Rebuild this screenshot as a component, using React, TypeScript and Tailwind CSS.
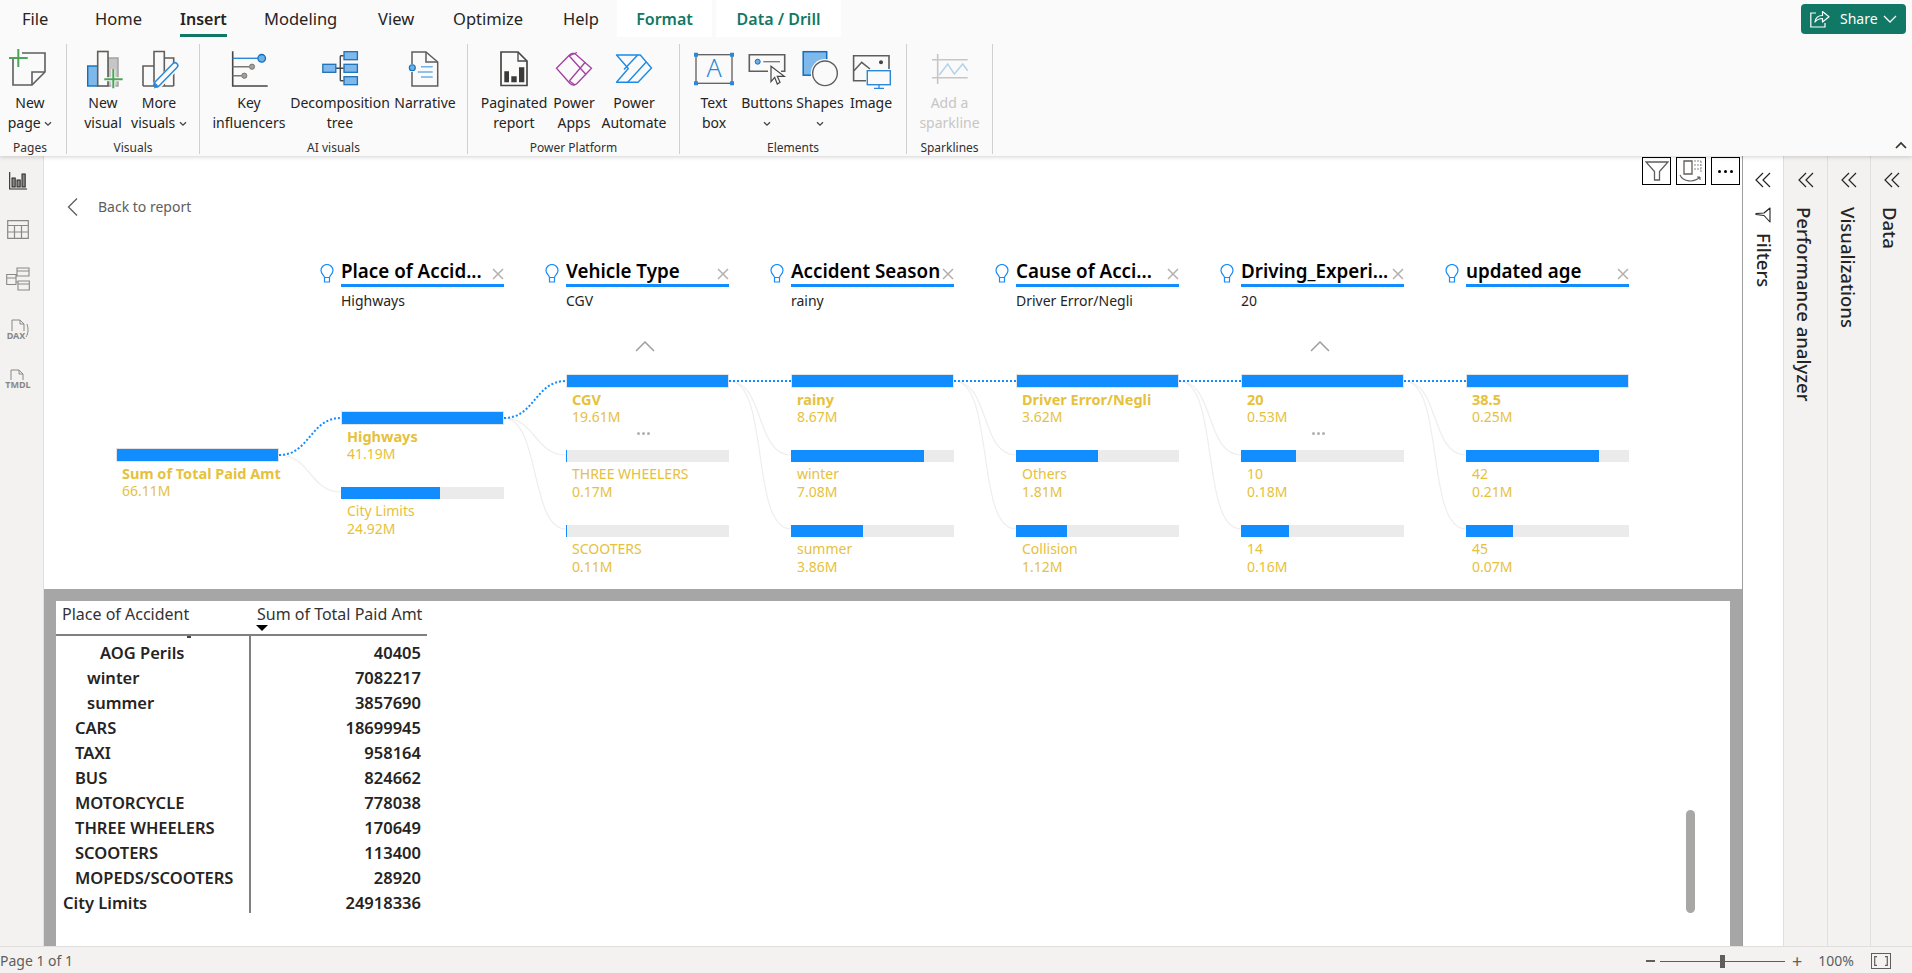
import React from 'react';

const BLUE = '#118dff';

interface TreeNode {
  label: string;
  value: string;
  pct: number;
  selected?: boolean;
}

interface TreeColumn {
  title?: string;
  picked?: string;
  offset: string;
  chevron?: boolean;
  nodes: TreeNode[];
}

const columns: TreeColumn[] = [
  {
    offset: 'h-[137px]',
    nodes: [{ label: 'Sum of Total Paid Amt', value: '66.11M', pct: 100, selected: true }],
  },
  {
    title: 'Place of Accid...',
    picked: 'Highways',
    offset: 'h-[100px]',
    nodes: [
      { label: 'Highways', value: '41.19M', pct: 100, selected: true },
      { label: 'City Limits', value: '24.92M', pct: 60.5 },
    ],
  },
  {
    title: 'Vehicle Type',
    picked: 'CGV',
    offset: 'h-[63px]',
    chevron: true,
    nodes: [
      { label: 'CGV', value: '19.61M', pct: 100, selected: true },
      { label: 'THREE WHEELERS', value: '0.17M', pct: 0.9 },
      { label: 'SCOOTERS', value: '0.11M', pct: 0.6 },
    ],
  },
  {
    title: 'Accident Season',
    picked: 'rainy',
    offset: 'h-[63px]',
    nodes: [
      { label: 'rainy', value: '8.67M', pct: 100, selected: true },
      { label: 'winter', value: '7.08M', pct: 81.7 },
      { label: 'summer', value: '3.86M', pct: 44.4 },
    ],
  },
  {
    title: 'Cause of Acci...',
    picked: 'Driver Error/Negli',
    offset: 'h-[63px]',
    nodes: [
      { label: 'Driver Error/Negli', value: '3.62M', pct: 100, selected: true },
      { label: 'Others', value: '1.81M', pct: 50 },
      { label: 'Collision', value: '1.12M', pct: 31.3 },
    ],
  },
  {
    title: 'Driving_Experi...',
    picked: '20',
    offset: 'h-[63px]',
    chevron: true,
    nodes: [
      { label: '20', value: '0.53M', pct: 100, selected: true },
      { label: '10', value: '0.18M', pct: 33.8 },
      { label: '14', value: '0.16M', pct: 29.6 },
    ],
  },
  {
    title: 'updated age',
    offset: 'h-[63px]',
    nodes: [
      { label: '38.5', value: '0.25M', pct: 100, selected: true },
      { label: '42', value: '0.21M', pct: 81.3 },
      { label: '45', value: '0.07M', pct: 28.9 },
    ],
  },
];

const tableRows = [
  { name: 'AOG Perils', value: '40405', indent: 'pl-[44px]' },
  { name: 'winter', value: '7082217', indent: 'pl-[31px]' },
  { name: 'summer', value: '3857690', indent: 'pl-[31px]' },
  { name: 'CARS', value: '18699945', indent: 'pl-[19px]' },
  { name: 'TAXI', value: '958164', indent: 'pl-[19px]' },
  { name: 'BUS', value: '824662', indent: 'pl-[19px]' },
  { name: 'MOTORCYCLE', value: '778038', indent: 'pl-[19px]' },
  { name: 'THREE WHEELERS', value: '170649', indent: 'pl-[19px]' },
  { name: 'SCOOTERS', value: '113400', indent: 'pl-[19px]' },
  { name: 'MOPEDS/SCOOTERS', value: '28920', indent: 'pl-[19px]' },
  { name: 'City Limits', value: '24918336', indent: 'pl-[7px]' },
];

const Icon: React.FC<{ children: React.ReactNode }> = ({ children }) => (
  <svg width="40" height="40" viewBox="0 0 40 40" fill="none" className="overflow-visible">
    {children}
  </svg>
);

const SmallChevron = () => (
  <svg width="8" height="6" viewBox="0 0 8 6" fill="none" className="inline-block">
    <path d="M1 1.2 4 4.2 7 1.2" stroke="#444" strokeWidth="1.3" />
  </svg>
);

const RibbonButton: React.FC<{
  className: string;
  icon: React.ReactNode;
  lines: React.ReactNode[];
  disabled?: boolean;
}> = ({ className, icon, lines, disabled }) => (
  <div className={`flex flex-col items-center shrink-0 ${className}`}>
    <div className="h-[49px] pt-[4px] flex justify-center">{icon}</div>
    <div className={`text-[14px] leading-[20px] text-center whitespace-nowrap ${disabled ? 'text-[#c8c6c4]' : 'text-[#252423]'}`}>
      {lines.map((line, i) => (
        <div key={i} className="h-[20px]">{line}</div>
      ))}
    </div>
  </div>
);

const RibbonGroup: React.FC<{ className: string; label: string; children: React.ReactNode }> = ({ className, label, children }) => (
  <div className={`shrink-0 h-[110px] flex flex-col border-r border-[#d2d0ce] ${className}`}>
    <div className="flex h-[89px]">{children}</div>
    <div className="text-[12px] leading-[16px] mt-[7px] text-center text-[#323130]">{label}</div>
  </div>
);

const Ribbon = () => (
  <div className="relative z-10 h-[156px] shrink-0 bg-[#fafafa] shadow-[0_1px_4px_rgba(0,0,0,0.18)]">
    <div className="flex h-[37px] text-[16.5px] leading-[24px] text-[#252423]">
      <div className="w-[22px]" />
      <div className="w-[73px] pt-[7px]">File</div>
      <div className="w-[85px] pt-[7px]">Home</div>
      <div className="w-[84px]">
        <div className="inline-block h-[37px] pt-[7px] text-[16px] font-semibold border-b-[3px] border-[#117865]">Insert</div>
      </div>
      <div className="w-[114px] pt-[7px]">Modeling</div>
      <div className="w-[75px] pt-[7px]">View</div>
      <div className="w-[110px] pt-[7px]">Optimize</div>
      <div className="w-[54px] pt-[7px]">Help</div>
      <div className="w-[95px] bg-white pt-[7px] text-center text-[16px] font-semibold text-[#117865]">Format</div>
      <div className="ml-[4px] w-[125px] bg-white pt-[7px] text-center text-[16px] font-semibold text-[#117865]">Data / Drill</div>
    </div>

    <div className="flex pt-[7px]">
      <RibbonGroup className="w-[67px] pr-[6px]" label="Pages">
        <RibbonButton
          className="w-[60px]"
          lines={['New', <span key="p">page <SmallChevron /></span>]}
          icon={
            <Icon>
              <path d="M3 10V37H22L35 24V5H12" stroke="#605e5c" strokeWidth="1.6" />
              <path d="M22 37V24H35" stroke="#605e5c" strokeWidth="1.6" />
              <path d="M-1 10H17.7M8.3 1V19" stroke="#4ca65a" strokeWidth="2" />
            </Icon>
          }
        />
      </RibbonGroup>

      <RibbonGroup className="w-[133px]" label="Visuals">
        <div className="w-[8px]" />
        <RibbonButton
          className="w-[56px]"
          lines={['New', 'visual']}
          icon={
            <Icon>
              <rect x="25" y="10" width="10" height="28" fill="#c8c6c4" stroke="#a19f9d" strokeWidth="1.4" />
              <rect x="4.7" y="18" width="10" height="20" fill="#7fb9ec" stroke="#106ebe" strokeWidth="1.4" />
              <rect x="14.7" y="3.5" width="10.3" height="34.5" fill="#fafafa" stroke="#605e5c" strokeWidth="1.6" />
              <path d="M21.3 31.3H39.7M30.3 21V40.3" stroke="#fafafa" strokeWidth="4" />
              <path d="M21.3 31.3H39.7M30.3 21V40.3" stroke="#4ca65a" strokeWidth="2" />
            </Icon>
          }
        />
        <RibbonButton
          className="w-[56px]"
          lines={['More', <span key="v">visuals <SmallChevron /></span>]}
          icon={
            <Icon>
              <path d="M4 38V18H15M15 38V3.5H25.3V38M25.3 10H34.7V38M4 38H34.7" stroke="#605e5c" strokeWidth="1.6" />
              <path d="M17 38.5 36.5 18" stroke="#fafafa" strokeWidth="9" />
              <path d="M18 36 36 17.5" stroke="#2b88d8" strokeWidth="7" strokeLinecap="round" />
              <path d="M18 36 36 17.5" stroke="#fafafa" strokeWidth="4" strokeLinecap="round" />
              <path d="M15 40.5 16 34.5 20 38.5Z" fill="#2b88d8" />
            </Icon>
          }
        />
      </RibbonGroup>

      <RibbonGroup className="w-[268px]" label="AI visuals">
        <div className="w-[9px]" />
        <RibbonButton
          className="w-[80px]"
          lines={['Key', 'influencers']}
          icon={
            <Icon>
              <path d="M3.7 3.3V38H38.7" stroke="#484644" strokeWidth="1.6" />
              <path d="M3.7 10.3H28.7" stroke="#2b88d8" strokeWidth="1.4" />
              <path d="M3.7 18.7H20M3.7 27.7H12.5" stroke="#797775" strokeWidth="1.4" />
              <circle cx="32.7" cy="10.3" r="3.8" fill="#6cb0e6" stroke="#106ebe" strokeWidth="1.3" />
              <circle cx="23" cy="18.7" r="2.6" fill="#a19f9d" stroke="#797775" strokeWidth="1" />
              <circle cx="15.3" cy="27.7" r="2.6" fill="#a19f9d" stroke="#797775" strokeWidth="1" />
            </Icon>
          }
        />
        <RibbonButton
          className="w-[102px]"
          lines={['Decomposition', 'tree']}
          icon={
            <Icon>
              <path d="M16 20.3H23.7M20.3 7.7V32.7M20.3 7.7H23.7M20.3 32.7H23.7" stroke="#484644" strokeWidth="1.4" />
              <rect x="2.8" y="16.3" width="13" height="8" fill="#7fb9ec" stroke="#1f6fb5" strokeWidth="1.3" />
              <rect x="24" y="3.7" width="13.4" height="8" fill="#7fb9ec" stroke="#1f6fb5" strokeWidth="1.3" />
              <rect x="24" y="16.3" width="13.4" height="8" fill="#7fb9ec" stroke="#1f6fb5" strokeWidth="1.3" />
              <rect x="24" y="28.7" width="13.4" height="8" fill="#7fb9ec" stroke="#1f6fb5" strokeWidth="1.3" />
            </Icon>
          }
        />
        <RibbonButton
          className="w-[68px]"
          lines={['Narrative']}
          icon={
            <Icon>
              <path d="M7 16V4H21L32.7 14V38H7V24" stroke="#605e5c" strokeWidth="1.5" />
              <path d="M21 4V14H32.7" stroke="#605e5c" strokeWidth="1.5" />
              <circle cx="7.3" cy="19.7" r="3" fill="#6cb0e6" stroke="#106ebe" strokeWidth="1.1" />
              <path d="M16 18.7H27.7M12.7 24H27.7M16 29H27.7" stroke="#6cb0e6" strokeWidth="1.4" />
            </Icon>
          }
        />
      </RibbonGroup>

      <RibbonGroup className="w-[212px]" label="Power Platform">
        <div className="w-[12px]" />
        <RibbonButton
          className="w-[68px]"
          lines={['Paginated', 'report']}
          icon={
            <Icon>
              <path d="M7 4H24L33 13V37.5H7Z" stroke="#484644" strokeWidth="1.7" />
              <path d="M24 4V13H33" stroke="#484644" strokeWidth="1.3" />
              <path d="M10.3 23.3H15V34.3H10.3ZM17.3 28.3H22.7V34.3H17.3ZM25 19.3H30.3V34.3H25Z" fill="#3b3a39" />
            </Icon>
          }
        />
        <RibbonButton
          className="w-[52px]"
          lines={['Power', 'Apps']}
          icon={
            <Icon>
              <path d="M2.5 20.3 15 7.5C17 5.5 20 4.5 22 6.5L37.5 20.3 23 35.5C21 37.5 18 37.5 16 35.5Z" stroke="#a33ea1" strokeWidth="1.3" />
              <path d="M15.3 8 32 26.5M15.3 33 31 14.5M15 8 23 4.5M15.5 33 21 37" stroke="#a33ea1" strokeWidth="1.3" />
            </Icon>
          }
        />
        <RibbonButton
          className="w-[68px]"
          lines={['Power', 'Automate']}
          icon={
            <Icon>
              <path d="M2.5 7H26.3L37.5 20 24 34.3H2.5L14.3 20.5Z" stroke="#1a8be6" strokeWidth="1.4" strokeLinejoin="round" />
              <path d="M23.7 7 10 21.5M32 14.3 13.7 34.3" stroke="#1a8be6" strokeWidth="1.4" />
            </Icon>
          }
        />
      </RibbonGroup>

      <RibbonGroup className="w-[227px]" label="Elements">
        <div className="w-[9px]" />
        <RibbonButton
          className="w-[50px]"
          lines={['Text', 'box']}
          icon={
            <Icon>
              <rect x="2" y="6.7" width="36" height="28.6" stroke="#605e5c" strokeWidth="1.3" />
              <path d="M0 4.7H4V8.7H0ZM36 4.7H40V8.7H36ZM0 33.3H4V37.3H0ZM36 33.3H40V37.3H36Z" fill="#2b88d8" />
              <text x="20" y="29" textAnchor="middle" fontSize="25" fill="#2b88d8" fontFamily="Noto Sans, sans-serif" fontWeight="300">A</text>
            </Icon>
          }
        />
        <RibbonButton
          className="w-[56px]"
          lines={['Buttons', <SmallChevron key="b" />]}
          icon={
            <Icon>
              <path d="M21 23.3H2.3V6.7H37.7V23.3H34" stroke="#605e5c" strokeWidth="1.6" />
              <circle cx="10.7" cy="13.7" r="2.5" fill="#6cb0e6" stroke="#106ebe" strokeWidth="1" />
              <path d="M16.3 13.7H33" stroke="#797775" strokeWidth="1.3" />
              <path d="M24 18.3V33.7L27.7 29.3 30.3 36 33 34.3 30.3 28.3H37.3Z" fill="#fafafa" stroke="#484644" strokeWidth="1.2" />
            </Icon>
          }
        />
        <RibbonButton
          className="w-[50px]"
          lines={['Shapes', <SmallChevron key="s" />]}
          icon={
            <Icon>
              <rect x="3.2" y="3.7" width="23.5" height="23.5" fill="#7fb9ec" stroke="#106ebe" strokeWidth="1.5" />
              <circle cx="25" cy="25.3" r="14.2" fill="#fafafa" />
              <circle cx="25" cy="25.3" r="12.3" fill="#fafafa" stroke="#605e5c" strokeWidth="1.4" />
            </Icon>
          }
        />
        <RibbonButton
          className="w-[52px]"
          lines={['Image']}
          icon={
            <Icon>
              <path d="M15 32.7H2.6V7.7H38V21" stroke="#605e5c" strokeWidth="1.6" />
              <path d="M3 22.7 10.7 14.3 19 21" stroke="#605e5c" strokeWidth="1.5" />
              <circle cx="30" cy="14.3" r="2" fill="#484644" />
              <rect x="16.3" y="22.7" width="23" height="14" fill="#fafafa" stroke="#2b88d8" strokeWidth="1.4" />
              <path d="M28 36.7V40M23 40.3H33" stroke="#2b88d8" strokeWidth="1.3" />
            </Icon>
          }
        />
      </RibbonGroup>

      <RibbonGroup className="w-[86px]" label="Sparklines">
        <RibbonButton
          className="w-[85px]"
          disabled
          lines={['Add a', 'sparkline']}
          icon={
            <Icon>
              <path d="M7.7 6V36M2 11.7H37.7M2 29.7H37.7" stroke="#c8c6c4" strokeWidth="1.6" />
              <path d="M9.3 27 17.7 16 24.3 26 32.7 16 37.7 22.7" stroke="#b5d3e8" strokeWidth="1.5" />
            </Icon>
          }
        />
      </RibbonGroup>
    </div>

    <div className="absolute right-[6px] top-[4px] w-[105px] h-[30px] rounded-[4px] bg-[#117865] text-white flex items-center pl-[9px]">
      <svg width="20" height="18" viewBox="0 0 20 18" fill="none" className="mr-[10px]">
        <path d="M6 3H0.8V17H15V13" stroke="white" strokeWidth="1.2" />
        <path d="M5 12C5.5 8 8.5 5.5 12.5 5.5V1.5L19 6.8 12.5 12V8.5C9.5 8.5 7 9.5 5 12Z" stroke="white" strokeWidth="1.2" strokeLinejoin="round" />
      </svg>
      <span className="text-[14px] leading-[20px]">Share</span>
      <svg width="14" height="8" viewBox="0 0 14 8" fill="none" className="ml-[5px]">
        <path d="M1 1 7 7 13 1" stroke="white" strokeWidth="1.3" />
      </svg>
    </div>
    <svg width="12" height="8" viewBox="0 0 12 8" fill="none" className="absolute right-[5px] top-[141px]">
      <path d="M1 7 6 2 11 7" stroke="#323130" strokeWidth="1.7" />
    </svg>
  </div>
);

const Sidebar = () => (
  <div className="w-[44px] shrink-0 bg-[#f3f2f1] border-r border-[#e1dfdd] pr-[7px] pt-[16px] flex flex-col items-center">
    <svg width="18" height="18" viewBox="0 0 18 18" fill="none">
      <path d="M0.7 0V17H18" stroke="#252423" strokeWidth="1.1" />
      <rect x="3" y="6" width="3.2" height="9" fill="#8a8886" stroke="#252423" />
      <rect x="8" y="8" width="3.2" height="7" fill="#8a8886" stroke="#252423" />
      <rect x="13" y="2" width="3.2" height="13" fill="#8a8886" stroke="#252423" />
    </svg>
    <svg width="22" height="19" viewBox="0 0 22 19" fill="none" className="mt-[30px]">
      <path d="M0.7 0.7H21.3V18.3H0.7ZM0.7 5.5H21.3M0.7 12H21.3M7.5 5.5V18.3M14.5 5.5V18.3" stroke="#8a8886" strokeWidth="1.2" />
    </svg>
    <svg width="24" height="24" viewBox="0 0 24 24" fill="none" className="mt-[28px]">
      <path d="M0.7 7.5H10V17.5H0.7ZM0.7 11H10M11 1H23V9H11ZM11 4H23M12 14H23.3V23H12ZM12 17H23.3M10 9H11M10 15H12" stroke="#8a8886" strokeWidth="1.1" />
    </svg>
    <svg width="24" height="22" viewBox="0 0 24 22" fill="none" className="mt-[28px] overflow-visible">
      <path d="M6 12V1H14L18 5V12M14 1V5H18M21 5C22.5 10 22.5 14 20 18" stroke="#8a8886" strokeWidth="1" />
      <text x="10" y="20" textAnchor="middle" fontSize="9" fontWeight="700" fill="#8a8886" fontFamily="Noto Sans, sans-serif">DAX</text>
    </svg>
    <svg width="24" height="22" viewBox="0 0 24 22" fill="none" className="mt-[28px] overflow-visible">
      <path d="M5 11V1H13L17 5V11M13 1V5H17" stroke="#8a8886" strokeWidth="1" />
      <text x="12" y="19" textAnchor="middle" fontSize="9" fontWeight="700" fill="#8a8886" fontFamily="Noto Sans, sans-serif">TMDL</text>
    </svg>
  </div>
);

const Bulb = () => (
  <svg width="14" height="19" viewBox="0 0 14 19" fill="none" className="absolute left-[-21px] top-[3px]">
    <path d="M4.5 13.5C4 11 1 9.5 1 6.5A6 6 0 0 1 13 6.5C13 9.5 10 11 9.5 13.5Z" stroke={BLUE} strokeWidth="1.2" />
    <path d="M4.5 13.5V18H9.5V13.5" stroke={BLUE} strokeWidth="1.2" />
  </svg>
);

const CloseX = () => (
  <svg width="12" height="12" viewBox="0 0 12 12" fill="none" className="shrink-0 mt-[7px]">
    <path d="M1 1 11 11M11 1 1 11" stroke="#b3b0ad" strokeWidth="1.5" />
  </svg>
);

const Connectors = () => {
  const selected = [
    'M279 455C310 455 310 418 341 418',
    'M504 418C535 418 535 381 566 381',
    'M729 381H791',
    'M954 381H1016',
    'M1179 381H1241',
    'M1404 381H1466',
  ];
  const others = [
    'M279 455C310 455 310 492 341 492',
    'M504 418C535 418 535 455 566 455',
    'M504 418C540 418 530 529 566 529',
    'M729 381C765 381 755 455 791 455',
    'M729 381C770 381 750 529 791 529',
    'M954 381C990 381 980 455 1016 455',
    'M954 381C995 381 975 529 1016 529',
    'M1179 381C1215 381 1205 455 1241 455',
    'M1179 381C1220 381 1200 529 1241 529',
    'M1404 381C1440 381 1430 455 1466 455',
    'M1404 381C1445 381 1425 529 1466 529',
  ];
  return (
    <svg className="absolute inset-0" width="1698" height="433" viewBox="44 156 1698 433" fill="none">
      {others.map(d => (
        <path key={d} d={d} stroke="#eeeeee" strokeWidth="1.2" />
      ))}
      {selected.map(d => (
        <path key={d} d={d} stroke={BLUE} strokeWidth="2" strokeDasharray="2 2" />
      ))}
    </svg>
  );
};

const TreeBar: React.FC<{ node: TreeNode; showDots: boolean }> = ({ node, showDots }) => (
  <div className="relative h-[75px]">
    <div className={`h-[14px] bg-[#ebebeb] ${node.selected ? 'border border-[#e3e3e3]' : 'border-y border-white'}`}>
      <div className="h-full bg-[#118dff]" style={{ width: `${node.pct}%` }} />
    </div>
    <div className="pl-[6px] mt-[2px] text-[14px] leading-[18px] text-[#e6c13c] whitespace-nowrap">
      <div className={node.selected ? 'font-bold text-[14.5px]' : ''}>{node.label}</div>
      <div>{node.value}</div>
    </div>
    {showDots && (
      <div className="absolute left-[71px] top-[58px] flex gap-[2px]">
        <div className="w-[3px] h-[3px] rounded-full bg-[#b3b0ad]" />
        <div className="w-[3px] h-[3px] rounded-full bg-[#b3b0ad]" />
        <div className="w-[3px] h-[3px] rounded-full bg-[#b3b0ad]" />
      </div>
    )}
  </div>
);

const DecompositionTree = () => (
  <div className="relative h-[433px] shrink-0 bg-white">
    <Connectors />
    <div className="absolute right-[2px] top-[1px] flex gap-[5px]">
      <div className="w-[29px] h-[28px] border border-black flex items-center justify-center bg-white">
        <svg width="24" height="22" viewBox="0 0 24 22" fill="none">
          <path d="M1 2H23L14.5 11.5V20H9.5V11.5Z" stroke="#605e5c" strokeWidth="1.3" />
        </svg>
      </div>
      <div className="w-[30px] h-[28px] border border-black flex items-center justify-center bg-white">
        <svg width="24" height="24" viewBox="0 0 24 24" fill="none">
          <path d="M5 2H13V15H5Z" stroke="#605e5c" strokeWidth="1.3" />
          <path d="M15 2H22M15 6H22M15 10H22M22 2V14" stroke="#8a8886" strokeWidth="1" strokeDasharray="2 1" />
          <path d="M1 16C4 23 15 24 21 18M21 18V21M21 18H18" stroke="#605e5c" strokeWidth="1.1" />
        </svg>
      </div>
      <div className="w-[29px] h-[28px] border border-black flex items-center justify-center gap-[3px] bg-white">
        <div className="w-[3px] h-[3px] rounded-full bg-black" />
        <div className="w-[3px] h-[3px] rounded-full bg-black" />
        <div className="w-[3px] h-[3px] rounded-full bg-black" />
      </div>
    </div>

    <div className="absolute left-[23px] top-[41px] flex items-center">
      <svg width="11" height="18" viewBox="0 0 11 18" fill="none">
        <path d="M10 0.5 1.5 9 10 17.5" stroke="#605e5c" strokeWidth="1.3" />
      </svg>
      <span className="ml-[20px] text-[14px] leading-[20px] text-[#605e5c]">Back to report</span>
    </div>

    <div className="relative flex gap-[62px] pl-[72px] pt-[105px]">
      {columns.map((col, c) => (
        <div key={c} className="w-[163px] shrink-0">
          <div className="h-[50px] relative">
            {col.title && (
              <>
                <Bulb />
                <div className="flex justify-between h-[23px]">
                  <span className="text-[18.8px] leading-[21px] font-semibold text-black whitespace-nowrap">{col.title}</span>
                  <CloseX />
                </div>
                <div className="h-[3px] bg-[#118dff]" />
                <div className="text-[14px] leading-[20px] mt-[4px] text-[#252423]">{col.picked}</div>
              </>
            )}
          </div>
          <div className={`${col.offset} flex justify-center pt-[30px]`}>
            {col.chevron && (
              <svg width="20" height="11" viewBox="0 0 20 11" fill="none" className="ml-[-6px]">
                <path d="M1 10 10 1 19 10" stroke="#a19f9d" strokeWidth="1.5" />
              </svg>
            )}
          </div>
          {col.nodes.map((node, n) => (
            <TreeBar key={n} node={node} showDots={!!col.chevron && n === 0} />
          ))}
        </div>
      ))}
    </div>
  </div>
);

const MatrixPanel = () => (
  <div className="flex-1 bg-[#a6a6a6] pt-[12px] px-[12px] min-h-0">
    <div className="relative h-full bg-white">
      <div className="w-[371px] h-[35px] border-b-2 border-[#808080] flex text-[16px] leading-[24px] text-[#333333]">
        <div className="w-[194px] pl-[6px] pt-[1px]">Place of Accident</div>
        <div className="pl-[7px] pt-[1px] relative whitespace-nowrap">
          Sum of Total Paid Amt
          <div className="absolute left-[6px] top-[24px] w-0 h-0 border-x-[6px] border-x-transparent border-t-[6px] border-t-black" />
        </div>
      </div>
      <div className="absolute left-[131px] top-[35px] w-[4px] h-[2px] bg-[#444]" />
      <div className="w-[371px] flex text-[16.5px] leading-[25px] font-semibold text-[#252423]">
        <div className="w-[195px] h-[277px] pt-[4px] border-r-2 border-[#808080] whitespace-nowrap">
          {tableRows.map(row => (
            <div key={row.name} className={`h-[25px] ${row.indent}`}>{row.name}</div>
          ))}
        </div>
        <div className="flex-1 pt-[4px] text-right pr-[6px]">
          {tableRows.map(row => (
            <div key={row.name} className="h-[25px]">{row.value}</div>
          ))}
        </div>
      </div>
      <div className="absolute left-[1630px] top-[209px] w-[9px] h-[103px] rounded-full bg-[#a8a7a5]" />
    </div>
  </div>
);

const ChevronsLeft = () => (
  <svg width="16" height="16" viewBox="0 0 16 16" fill="none">
    <path d="M8 1 1 8 8 15M15 1 8 8 15 15" stroke="#252423" strokeWidth="1.2" />
  </svg>
);

const SidePane: React.FC<{ className: string; label: string; funnel?: boolean }> = ({ className, label, funnel }) => (
  <div className={`shrink-0 flex flex-col items-center pt-[16px] ${className}`}>
    <ChevronsLeft />
    {funnel ? (
      <svg width="16" height="16" viewBox="0 0 16 16" fill="none" className="mt-[19px]">
        <path d="M15 1V15L9 8.5 1 7.5V6.5L9 6Z" stroke="#252423" strokeWidth="1.1" strokeLinejoin="round" />
      </svg>
    ) : null}
    <div className={`[writing-mode:vertical-rl] text-[18.5px] leading-[22px] font-medium text-[#252423] whitespace-nowrap ${funnel ? 'mt-[10px] ml-[2px]' : 'mt-[19px] mr-[3px]'}`}>
      {label}
    </div>
  </div>
);

const StatusBar = () => (
  <div className="h-[27px] shrink-0 bg-[#f3f2f1] border-t border-[#e1dfdd] pt-[2px] flex items-center text-[14px] text-[#605e5c] leading-[20px]">
    <span>Page 1 of 1</span>
    <div className="ml-auto flex items-center">
      <span className="w-[9px] h-[2px] bg-[#605e5c]" />
      <div className="relative ml-[5px] w-[125px] h-[1px] bg-[#605e5c]">
        <div className="absolute left-[60px] top-[-6px] w-[5px] h-[13px] bg-[#605e5c]" />
      </div>
      <span className="ml-[7px] text-[18px] leading-[20px]">+</span>
      <span className="ml-[16px]">100%</span>
      <div className="ml-[17px] mr-[21px] w-[20px] h-[16px] border border-[#605e5c] flex items-center justify-center">
        <svg width="14" height="10" viewBox="0 0 14 10" fill="none">
          <path d="M3 0.7H0.7V9.3H3M11 0.7H13.3V9.3H11" stroke="#605e5c" strokeWidth="1.2" />
        </svg>
      </div>
    </div>
  </div>
);

export default function App() {
  return (
    <div className="w-[1912px] h-[973px] flex flex-col overflow-hidden bg-white font-['Noto_Sans',sans-serif]">
      <Ribbon />
      <div className="flex flex-1 min-h-0">
        <Sidebar />
        <div className="w-[1698px] shrink-0 flex flex-col">
          <DecompositionTree />
          <MatrixPanel />
        </div>
        <SidePane className="w-[41px] bg-white border-l border-[#a19f9d]" label="Filters" funnel />
        <SidePane className="w-[44px] bg-[#f3f2f1] border-l border-[#e1dfdd]" label="Performance analyzer" />
        <SidePane className="w-[43px] bg-[#f3f2f1] border-l border-[#e1dfdd]" label="Visualizations" />
        <SidePane className="w-[42px] bg-[#f3f2f1] border-l border-[#e1dfdd]" label="Data" />
      </div>
      <StatusBar />
    </div>
  );
}
